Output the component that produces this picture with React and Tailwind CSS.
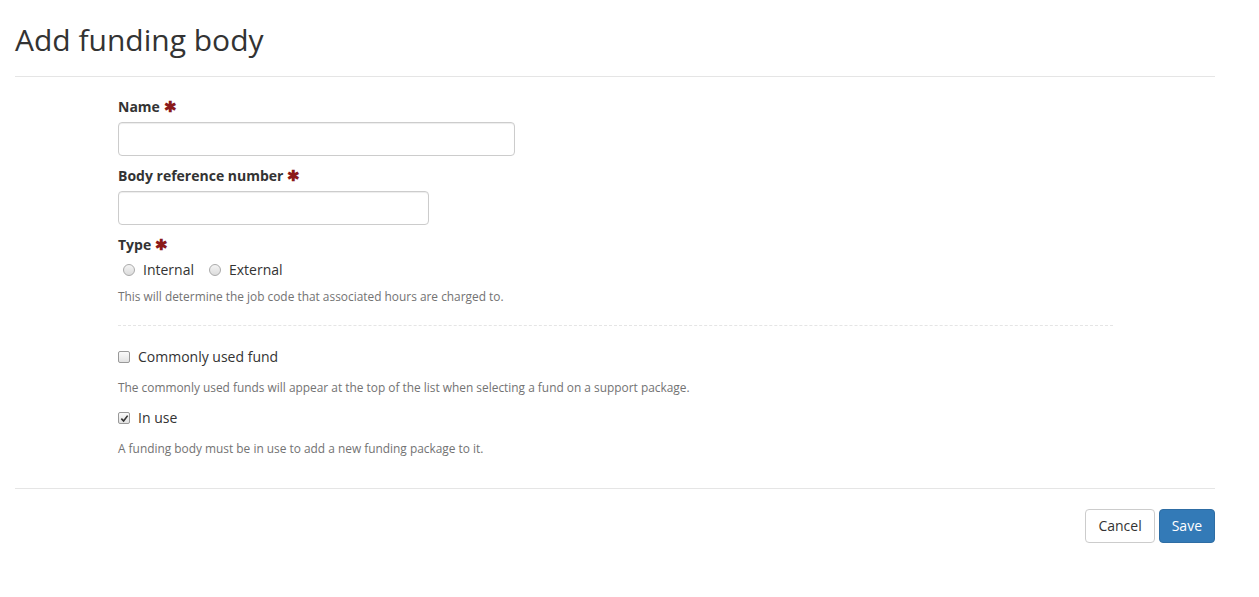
import React from 'react';

const Required = () => <span className="text-[#8b1a1a] ml-1 text-[15px]">✱</span>;

const App = () => {
    return (
        <div className="bg-white min-h-[597px] text-[#333] font-['Open_Sans',sans-serif] text-[14px]">
            <div className="w-[1200px] ml-[15px]">
                <h1 className="text-[30px] leading-[34px] pt-[23px] pb-[19px] border-b border-[#e5e5e5]">Add funding body</h1>

                <form className="ml-[103px] w-[995px] pt-[19px]">
                    {/* Name */}
                    <label className="block font-bold leading-[20px]">Name<Required /></label>
                    <input type="text" className="block mt-[5px] w-[397px] h-[34px] border border-[#ccc] rounded-[4px] px-3 shadow-[inset_0_1px_1px_rgba(0,0,0,0.075)]" />

                    {/* Body reference number */}
                    <label className="block font-bold leading-[20px] mt-[9px]">Body reference number<Required /></label>
                    <input type="text" className="block mt-[5px] w-[311px] h-[34px] border border-[#ccc] rounded-[4px] px-3 shadow-[inset_0_1px_1px_rgba(0,0,0,0.075)]" />

                    {/* Type */}
                    <label className="block font-bold leading-[20px] mt-[9px]">Type<Required /></label>
                    <div className="flex items-center gap-[15px] mt-[5px] pl-[5px] leading-[20px]">
                        <label className="flex items-center gap-[8px]">
                            <span className="w-[12px] h-[12px] rounded-full border border-[#aaa] bg-gradient-to-b from-[#f4f4f4] to-[#dcdcdc]"></span>
                            Internal
                        </label>
                        <label className="flex items-center gap-[8px]">
                            <span className="w-[12px] h-[12px] rounded-full border border-[#aaa] bg-gradient-to-b from-[#f4f4f4] to-[#dcdcdc]"></span>
                            External
                        </label>
                    </div>
                    <p className="text-[11.9px] text-[#737373] leading-[17px] mt-[8px]">This will determine the job code that associated hours are charged to.</p>

                    <div className="border-t border-dashed border-[#e5e5e5] mt-[20px] mb-[20px]"></div>

                    {/* Commonly used */}
                    <label className="flex items-center gap-[8px] leading-[22px]">
                        <span className="w-[12px] h-[12px] rounded-[2px] border border-[#999] bg-gradient-to-b from-[#fafafa] to-[#e2e2e2]"></span>
                        Commonly used fund
                    </label>
                    <p className="text-[11.9px] text-[#737373] leading-[17px] mt-[11px]">The commonly used funds will appear at the top of the list when selecting a fund on a support package.</p>

                    {/* In use */}
                    <label className="flex items-center gap-[8px] leading-[22px] mt-[11px]">
                        <span className="w-[12px] h-[12px] rounded-[2px] border border-[#999] bg-gradient-to-b from-[#fafafa] to-[#e2e2e2] flex items-center justify-center">
                            <svg width="9" height="9" viewBox="0 0 10 10"><path d="M1.5 5.2 L4 7.8 L8.5 1.8" stroke="#333" strokeWidth="1.8" fill="none" /></svg>
                        </span>
                        In use
                    </label>
                    <p className="text-[11.9px] text-[#737373] leading-[17px] mt-[11px]">A funding body must be in use to add a new funding package to it.</p>
                </form>

                <div className="border-t border-[#e5e5e5] mt-[31px] pt-[20px] flex justify-end gap-[4px]">
                    <button className="h-[34px] px-[12px] border border-[#ccc] rounded-[4px] bg-white text-[#333] leading-[20px]">Cancel</button>
                    <button className="h-[34px] px-[12px] border border-[#2e6da4] rounded-[4px] bg-[#337ab7] text-white leading-[20px]">Save</button>
                </div>
            </div>
        </div>
    );
};

export default App;
